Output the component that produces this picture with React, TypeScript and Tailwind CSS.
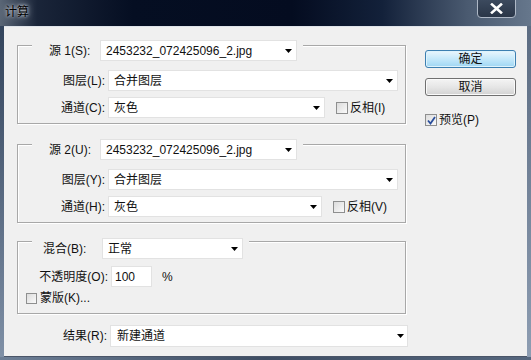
const Arrow = () => (
  <svg width="7" height="4" viewBox="0 0 7 4" className="shrink-0">
    <polygon points="0,0 7,0 3.5,4" fill="#000" />
  </svg>
)

const Combo = ({ value, w }: { value: string; w: string }) => (
  <div className={`${w} h-[21px] bg-white border border-[#e2e2e2] flex items-center justify-between pl-[5px] pr-[4px]`}>
    <span className="leading-none">{value}</span>
    <Arrow />
  </div>
)

const Check = ({ checked = false, size = "w-[12px] h-[12px]" }: { checked?: boolean; size?: string }) => (
  <div className={`${size} border border-[#8e8f8f] bg-gradient-to-br from-[#dcdcdc] to-[#fafafa] flex items-center justify-center shrink-0`}>
    {checked && (
      <svg width="9" height="9" viewBox="0 0 9 9">
        <path d="M1 4.5 L3.5 7.5 L8 1" stroke="#2b4f9c" strokeWidth="1.8" fill="none" />
      </svg>
    )}
  </div>
)

const SourceGroup = ({
  src,
  layerKey,
  chanKey,
  invKey,
  chanW,
}: {
  src: string
  layerKey: string
  chanKey: string
  invKey: string
  chanW: string
}) => (
  <div className="w-[389px] h-[79px] border border-[#a8a8a8] shadow-[inset_1px_1px_0_#fff,1px_1px_0_#fff] flex flex-col">
    <div className="-mt-[6px] ml-[14px] w-fit bg-[#f0f0f0] flex items-center pl-[17px] pr-[6px]">
      <span className="w-[51px] leading-none">{src}</span>
      <Combo value="2453232_072425096_2.jpg" w="w-[197px]" />
    </div>
    <div className="mt-[9px] flex items-center">
      <span className="w-[90px] text-right pr-[3px] leading-none">图层({layerKey}):</span>
      <Combo value="合并图层" w="w-[290px]" />
    </div>
    <div className="mt-[6px] flex items-center">
      <span className="w-[90px] text-right pr-[3px] leading-none">通道({chanKey}):</span>
      <Combo value="灰色" w={chanW} />
      <div className="ml-[11px] flex items-center">
        <Check />
        <span className="ml-[2px] leading-none">反相({invKey})</span>
      </div>
    </div>
  </div>
)

export default function App() {
  return (
    <div className="w-[531px] h-[360px] overflow-hidden flex flex-col bg-[#2b3a50] text-[12px] text-[#111] font-['Liberation_Sans','Noto_Sans_CJK_SC',sans-serif]">
      {/* title bar */}
      <div className="h-[26px] shrink-0 flex items-start justify-between bg-[linear-gradient(90deg,#5a6676_0%,#1a2539_7%,#050e22_25%,#040c20_55%,#13213a_72%,#4a5a70_88%,#66778c_100%)]">
        <span className="mt-[6px] ml-[5px] leading-none text-[12px] text-black [text-shadow:0_0_6px_#cfd6df,0_0_3px_#cfd6df]">计算</span>
        <div className="-mt-[1px] mr-[15px] w-[39px] h-[19px] rounded-b-[4px] border border-[#aeb8c6] bg-gradient-to-b from-[#3c4a5e] to-[#2a3648] flex items-center justify-center">
          <svg width="13" height="11" viewBox="0 0 13 11">
            <path d="M2 1.5 L11 9.5 M11 1.5 L2 9.5" stroke="#fff" strokeWidth="2.6" strokeLinecap="square" />
          </svg>
        </div>
      </div>

      <div className="flex h-[331px] shrink-0">
        <div className="w-[4px] bg-gradient-to-b from-[#33445c] to-[#7f90a6]" />
        {/* client */}
        <div className="w-[523px] bg-[#f0f0f0] border-t border-[#dfe4ea] border-b border-b-[#4a5568] flex">
          <div className="ml-[13px] w-[389px] flex flex-col">
            <div className="mt-[18px]">
              <SourceGroup src="源 1(S):" layerKey="L" chanKey="C" invKey="I" chanW="w-[217px]" />
            </div>
            <div className="mt-[20px]">
              <SourceGroup src="源 2(U):" layerKey="Y" chanKey="H" invKey="V" chanW="w-[214px]" />
            </div>

            {/* blend group */}
            <div className="mt-[18px] w-[389px] h-[73px] border border-[#a8a8a8] shadow-[inset_1px_1px_0_#fff,1px_1px_0_#fff] flex flex-col">
              <div className="-mt-[4px] ml-[14px] w-fit bg-[#f0f0f0] flex items-center pl-[11px] pr-[6px]">
                <span className="w-[59px] leading-none">混合(B):</span>
                <Combo value="正常" w="w-[141px]" />
              </div>
              <div className="mt-[7px] flex items-center">
                <span className="w-[93px] text-right pr-[3px] leading-none">不透明度(O):</span>
                <div className="w-[41px] h-[21px] bg-white border border-[#e2e2e2] flex items-center pl-[3px]">
                  <span className="leading-none">100</span>
                </div>
                <span className="ml-[10px] leading-none">%</span>
              </div>
              <div className="mt-[5px] ml-[8px] flex items-center">
                <Check size="w-[11px] h-[11px]" />
                <span className="ml-[3px] leading-none">蒙版(K)...</span>
              </div>
            </div>

            <div className="mt-[11px] flex items-center">
              <span className="w-[93px] shrink-0 text-right pr-[3px] leading-none">结果(R):</span>
              <div className="w-[298px] shrink-0 h-[22px] bg-white border border-[#e2e2e2] flex items-center justify-between pl-[6px] pr-[3px]">
                <span className="leading-none">新建通道</span>
                <Arrow />
              </div>
            </div>
          </div>

          {/* buttons */}
          <div className="ml-[19px] w-[91px] flex flex-col pt-[23px]">
            <div className="h-[18px] rounded-[3px] border border-[#3c7fb1] bg-gradient-to-b from-[#eaf6fd] via-[#c4e8fa] to-[#9fd6f3] shadow-[inset_0_0_0_1px_#def3fc] flex items-center justify-center leading-none">
              确定
            </div>
            <div className="mt-[10px] h-[18px] rounded-[3px] border border-[#707070] bg-gradient-to-b from-[#f4f4f4] via-[#e6e6e6] to-[#d2d2d2] shadow-[inset_0_0_0_1px_#fafafa] flex items-center justify-center leading-none">
              取消
            </div>
            <div className="mt-[18px] flex items-center">
              <Check checked />
              <span className="ml-[2px] leading-none">预览(P)</span>
            </div>
          </div>
        </div>
        <div className="w-[4px] bg-gradient-to-b from-[#5c6c82] to-[#8d9db2]" />
      </div>
      <div className="flex-1 bg-gradient-to-r from-[#6d7f96] via-[#3e4d63] to-[#56677e]" />
    </div>
  )
}
